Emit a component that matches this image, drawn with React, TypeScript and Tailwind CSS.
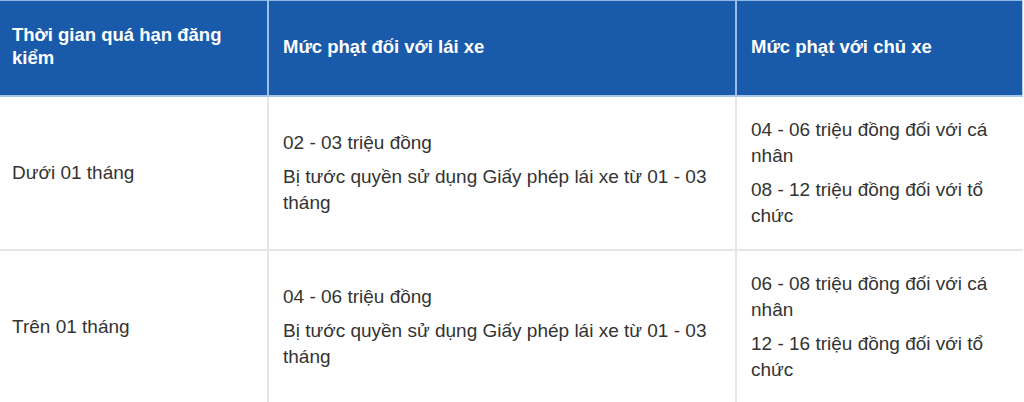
const rows = [
  {
    time: "Dưới 01 tháng",
    driver: ["02 - 03 triệu đồng", "Bị tước quyền sử dụng Giấy phép lái xe từ 01 - 03 tháng"],
    owner: ["04 - 06 triệu đồng đối với cá nhân", "08 - 12 triệu đồng đối với tổ chức"],
  },
  {
    time: "Trên 01 tháng",
    driver: ["04 - 06 triệu đồng", "Bị tước quyền sử dụng Giấy phép lái xe từ 01 - 03 tháng"],
    owner: ["06 - 08 triệu đồng đối với cá nhân", "12 - 16 triệu đồng đối với tổ chức"],
  },
];

function Lines({ items }: { items: string[] }) {
  return (
    <div className="flex flex-col gap-[8px]">
      {items.map((t) => (
        <p key={t}>{t}</p>
      ))}
    </div>
  );
}

export default function App() {
  return (
    <div className="w-[1024px] h-[402px] overflow-hidden bg-white font-['Liberation_Sans',Arial,sans-serif]">
      <table className="w-[1023px] table-fixed border-collapse text-[19px] leading-[26px] text-[#333]">
        <colgroup>
          <col className="w-[268px]" />
          <col className="w-[468px]" />
          <col />
        </colgroup>
        <thead>
          <tr className="h-[95px] bg-[#1a5aab] text-left align-middle font-bold text-white text-[18.5px] leading-[23px]">
            <th className="border-t border-b-2 border-r-2 border-t-[#8fb6e6] border-b-[#a6c6ec] border-r-[#9dc0ea] pl-3 pr-3 pb-[3px]">
              Thời gian quá hạn đăng kiểm
            </th>
            <th className="border-t border-b-2 border-r-2 border-t-[#8fb6e6] border-b-[#a6c6ec] border-r-[#9dc0ea] px-[14px] pb-[3px]">
              Mức phạt đối với lái xe
            </th>
            <th className="border-t border-b-2 border-r border-t-[#8fb6e6] border-b-[#a6c6ec] border-r-[#b7d0ee] px-[14px] pb-[3px]">
              Mức phạt với chủ xe
            </th>
          </tr>
        </thead>
        <tbody>
          {rows.map((r) => (
            <tr key={r.time} className="align-middle">
              <td className="border-b-2 border-r-2 border-[#e6e6e6] pl-3 pr-3 py-[20px]">{r.time}</td>
              <td className="border-b-2 border-r-2 border-[#e6e6e6] px-[14px] py-[20px]">
                <Lines items={r.driver} />
              </td>
              <td className="border-b-2 border-[#e6e6e6] pl-[14px] pr-[16px] py-[20px]">
                <Lines items={r.owner} />
              </td>
            </tr>
          ))}
        </tbody>
      </table>
    </div>
  );
}
